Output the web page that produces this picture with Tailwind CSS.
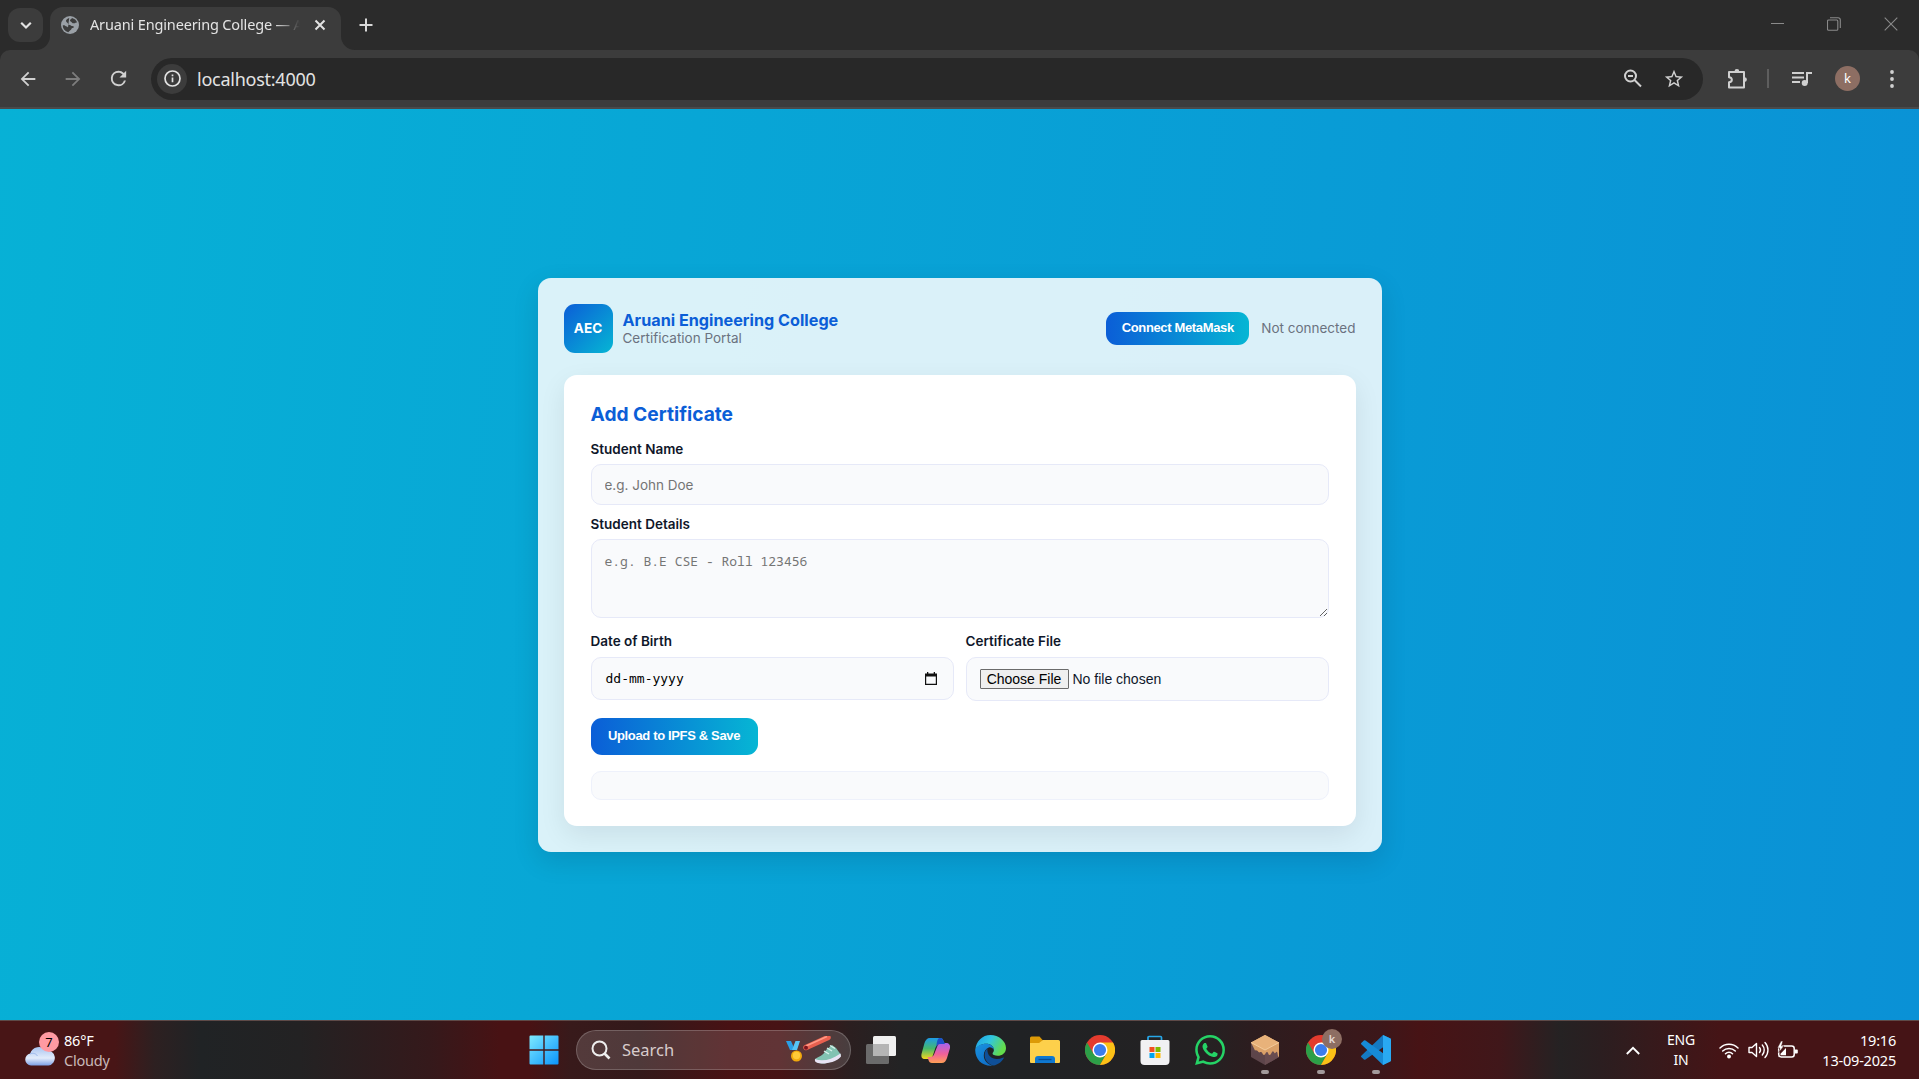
<!DOCTYPE html>
<html lang="en">
<head>
<meta charset="utf-8">
<title>Aruani Engineering College — Certification Portal</title>
<script src="https://cdn.jsdelivr.net/npm/@tailwindcss/browser@4"></script>
</head>
<body class="h-[1079px] w-[1919px] overflow-hidden flex flex-col font-['Noto_Sans',sans-serif]">

<!-- tab strip -->
<header class="h-[109px] shrink-0 flex flex-col bg-[#2b2b2b] text-[#e3e3e3]">
  <div class="h-[50px] flex items-start justify-between">
    <div class="flex items-start pl-2">
      <button class="mt-2 w-[35px] h-[34px] rounded-xl bg-[#3c3c3c] flex items-center justify-center">
        <svg class="w-3.5 h-3.5" viewBox="0 0 14 14" fill="none" stroke="#e3e3e3" stroke-width="2.2"><path d="M2.2 4.8 7 9.5l4.800-4.700"/></svg>
      </button>
      <div class="relative ml-[7px] mt-[7px] h-[43px] w-[291px] rounded-t-[13px] bg-[#3c3c3c] flex items-center pl-[11px] pb-[7px]">
        <svg class="absolute left-[-14px] bottom-0 w-3.5 h-3.5" viewBox="0 0 14 14"><path d="M14 0v14H0A14 14 0 0 0 14 0Z" fill="#3c3c3c"/></svg>
        <svg class="absolute right-[-14px] bottom-0 w-3.5 h-3.5" viewBox="0 0 14 14"><path d="M0 0v14h14A14 14 0 0 1 0 0Z" fill="#3c3c3c"/></svg>
        <svg class="w-[18px] h-[18px] shrink-0" viewBox="0 0 18 18"><circle cx="9" cy="9" r="9" fill="#9aa0a6"/><path d="M8.200 1.900C6.500 2.400 5 3.500 5 5c0 1.500 2 1.400 2 2.700C7 9 8.800 8.500 9.500 9.300c.9.900 1.500.700 2.600.9 1.400.2.800 1.700-.6 1.800-1.200 0-1 1.700-2.200 2.300-.9.500-1.300 1.200-2 1.900A7.400 7.400 0 0 1 1.700 9.500C3 8.600 4 9.600 5 10.200c.9.600 1.700.3 2 1.200" fill="#3c3c3c"/><path d="M11 2c-.6 1.300-2 1.300-2 2.500s1.500 1 1.900 2c.4 1 2.700 1.200 3.700.3.600-.5 1.300-.4 1.600-.2A7.500 7.500 0 0 0 11 2Z" fill="#3c3c3c"/></svg>
        <span class="ml-[11px] w-[210px] overflow-hidden whitespace-nowrap text-[14.500px] tracking-[-0.150px] [mask-image:linear-gradient(to_right,black_88%,transparent)]">Aruani Engineering College — Aruani</span>
        <svg class="ml-[13px] w-3.5 h-3.5 shrink-0" viewBox="0 0 14 14" stroke="#e3e3e3" stroke-width="2"><path d="m2.500 2.500 9 9m0-9-9 9"/></svg>
      </div>
      <svg class="ml-[18px] mt-[18px] w-[14px] h-[14px]" viewBox="0 0 14 14" stroke="#d8d8d8" stroke-width="2"><path d="M7 .5v13M.5 7h13"/></svg>
    </div>
    <div class="flex items-center gap-[43px] pt-[17px] pr-[21px]">
      <svg class="w-[13px] h-[14px]" viewBox="0 0 13 14" stroke="#8a8a8a"><path d="M0 6.500h13"/></svg>
      <svg class="w-[14px] h-[14px]" viewBox="0 0 14 14" fill="none" stroke="#8a8a8a" stroke-width="1.100"><rect x=".5" y="3" width="10.300" height="10.300" rx="1"/><path d="M3 .7h8a2.300 2.300 0 0 1 2.300 2.300v8"/></svg>
      <svg class="w-[14px] h-[14px]" viewBox="0 0 14 14" stroke="#8a8a8a" stroke-width="1.100"><path d="m.7.7 12.600 12.600m0-12.600L.7 13.300"/></svg>
    </div>
  </div>

  <!-- toolbar -->
  <div class="h-[59px] rounded-t-[10px] bg-[#3c3c3c] border-b-2 border-[#4a4a4a] flex items-center">
    <div class="flex items-center pl-[17px] gap-[23px]">
      <svg class="w-[22px] h-[22px]" viewBox="0 0 24 24" fill="#d0d0d0"><path d="M20 11H7.830l5.590-5.590L12 4l-8 8 8 8 1.410-1.410L7.830 13H20v-2z"/></svg>
      <svg class="w-[22px] h-[22px]" viewBox="0 0 24 24" fill="#7d7d7d"><path d="m12 4-1.410 1.410L16.170 11H4v2h12.170l-5.580 5.590L12 20l8-8z"/></svg>
      <svg class="w-[23px] h-[23px]" viewBox="0 0 24 24" fill="#d0d0d0"><path d="M17.650 6.350A7.950 7.950 0 0 0 12 4a8 8 0 1 0 7.750 10h-2.080A6 6 0 1 1 12 6c1.660 0 3.140.69 4.220 1.780L13 11h7V4l-2.350 2.350z"/></svg>
    </div>
    <div class="ml-[21px] h-[42px] w-[1552px] rounded-full bg-[#282828] flex items-center pl-1.5">
      <div class="w-[30px] h-[30px] rounded-full bg-[#3c3c3c] flex items-center justify-center">
        <svg class="w-[17px] h-[17px]" viewBox="0 0 17 17" fill="none" stroke="#e3e3e3" stroke-width="1.700"><circle cx="8.500" cy="8.500" r="7.500"/><path d="M8.500 7.500v4.700M8.500 4.500v1.800"/></svg>
      </div>
      <span class="ml-[10px] text-[18px] leading-none tracking-[-0.250px]">localhost:4000</span>
      <div class="ml-auto flex items-center gap-[19px] pr-[18px]">
        <svg class="w-[22px] h-[22px]" viewBox="0 0 22 22" fill="none" stroke="#d0d0d0" stroke-width="2"><circle cx="8.500" cy="8" r="5.500"/><path d="m12.500 12 6.500 6.500M6 8h5"/></svg>
        <svg class="w-[22px] h-[22px]" viewBox="0 0 24 24" fill="#d0d0d0"><path d="m22 9.240-7.190-.62L12 2 9.190 8.630 2 9.240l5.460 4.730L5.820 21 12 17.270 18.180 21l-1.630-7.030L22 9.240zM12 15.400l-3.760 2.270 1-4.280-3.320-2.880 4.380-.38L12 6.100l1.710 4.040 4.380.38-3.320 2.880 1 4.280L12 15.400z"/></svg>
      </div>
    </div>
    <div class="flex items-center">
      <svg class="ml-6 w-[22px] h-[22px]" viewBox="0 0 22 22" fill="none" stroke="#d0d0d0" stroke-width="2" stroke-linejoin="round"><path d="M2 4h15v15.500H2v-5.200c3.800-.4 3.800-4.700 0-5.100Z"/><path d="M7.500 3.500a2.400 2.400 0 0 1 4.800 0ZM17.500 9.200a2.400 2.400 0 0 1 0 4.800Z" fill="#d0d0d0" stroke="none"/></svg>
      <div class="ml-[18px] w-[2px] h-[19px] bg-[#5e5e5e]"></div>
      <svg class="ml-[23px] w-[21px] h-[18px]" viewBox="0 0 21 18" fill="none" stroke="#d0d0d0" stroke-width="2"><path d="M0 3h12M0 7.500h12M0 12h8M15 13V3h5"/><circle cx="12.700" cy="13" r="3" fill="#d0d0d0" stroke="none"/></svg>
      <div class="ml-[22px] w-[25px] h-[25px] rounded-full bg-[#8d6e63] flex items-center justify-center text-[13px] text-white">k</div>
      <svg class="ml-[30px] w-1 h-[18px]" viewBox="0 0 4 18" fill="#d0d0d0"><circle cx="2" cy="2" r="1.900"/><circle cx="2" cy="9" r="1.900"/><circle cx="2" cy="16" r="1.900"/></svg>
    </div>
  </div>
</header>

<!-- page -->
<main class="h-[911px] shrink-0 bg-linear-[97deg,#07b1d6,#0a91d6] flex justify-center pt-[169px] text-[#0f172a] font-[Inter,sans-serif]">
  <section class="w-[844px] h-[574px] rounded-[13px] bg-white/85 p-[26px] shadow-[0_9px_27px_rgba(2,6,23,0.120)]">
    <div class="flex items-center h-[49px]">
      <div class="w-[49px] h-[49px] rounded-[11px] bg-linear-[135deg,#0b5ed7,#06b6d4] flex items-center justify-center text-white font-bold text-[13.500px]">AEC</div>
      <div class="ml-[10px]">
        <h1 class="text-[16.200px] leading-[19px] font-bold text-[#0b5ed7]">Aruani Engineering College</h1>
        <p class="text-[13.500px] leading-[16px] text-[#6b7280]">Certification Portal</p>
      </div>
      <button class="ml-auto w-[143px] h-[33px] pb-[2px] rounded-[11px] bg-linear-[90deg,#0b5ed7,#06b6d4] text-white font-bold text-[13px] tracking-[-0.350px] font-['Liberation_Sans',sans-serif]">Connect MetaMask</button>
      <span class="ml-[12px] text-[13.500px] text-[#6b7280]">Not connected</span>
    </div>
    <form class="mt-[22px] h-[451px] rounded-[13px] bg-white px-[27px] pt-[27px] shadow-[0_9px_27px_rgba(2,6,23,0.080)]">
      <h2 class="text-[19.200px] leading-[24px] font-bold text-[#0b5ed7]">Add Certificate</h2>
      <label class="mt-[15px] block text-[13.500px] leading-[16px] font-semibold">Student Name</label>
      <input class="mt-[7px] block w-full h-[41px] rounded-[10px] border border-[#e6e9f8] bg-[#f9fafc] px-[13px] text-[13.500px] placeholder:text-[#757575]" placeholder="e.g. John Doe">
      <label class="mt-[11px] block text-[13.500px] leading-[16px] font-semibold">Student Details</label>
      <textarea class="mt-[7px] block w-full h-[79px] resize rounded-[10px] border border-[#e6e9f8] bg-[#f9fafc] px-[13px] pt-[12px] text-[13px] leading-[18px] font-['Noto_Sans_Mono','DejaVu_Sans_Mono',monospace] placeholder:text-[#757575]" placeholder="e.g. B.E CSE - Roll 123456"></textarea>
      <div class="mt-[15px] grid grid-cols-[363px_363px] gap-3">
        <div>
          <label class="block text-[13.500px] leading-[16px] font-semibold">Date of Birth</label>
          <div class="mt-2 h-[43px] rounded-[10px] border border-[#e6e9f8] bg-[#f9fafc] pl-[14px] pr-[16px] flex items-center justify-between text-black">
            <span class="text-[13px] font-['DejaVu_Sans_Mono',monospace]">dd-mm-yyyy</span>
            <svg class="w-3 h-[13px]" viewBox="0 0 12 13"><path d="M.6 2.500h10.800v9.800H.6Z" fill="none" stroke="#111" stroke-width="1.200"/><path d="M0 1.500h12v3H0ZM2 0h1.300v2H2ZM8.700 0H10v2H8.700Z" fill="#111"/></svg>
          </div>
        </div>
        <div>
          <label class="block text-[13.500px] leading-[16px] font-semibold">Certificate File</label>
          <div class="mt-2 h-[44px] rounded-[10px] border border-[#e6e9f8] bg-[#f9fafc] pl-[13px] flex items-center font-['Liberation_Sans',sans-serif] text-[14px]">
            <button type="button" class="w-[89px] h-5 border border-[#6b6b6b] rounded-[1px] bg-[#efefef] text-black leading-none">Choose File</button>
            <span class="ml-1">No file chosen</span>
          </div>
        </div>
      </div>
      <button type="button" class="mt-[17px] block w-[167px] h-[37px] pb-[2px] rounded-[11px] bg-linear-[90deg,#0b5ed7,#06b6d4] text-white font-bold text-[13px] tracking-[-0.350px] font-['Liberation_Sans',sans-serif]">Upload to IPFS &amp; Save</button>
      <div class="mt-4 h-[29px] rounded-[10px] border border-[#eef1fb] bg-[#f9fafc]"></div>
    </form>
  </section>
</main>

<!-- taskbar -->
<footer class="relative h-[59px] shrink-0 border-t border-[#5e4a48] text-white bg-linear-[90deg,#481516_0px,#481516_115px,#2d2021_155px,#202325_200px,#232223_300px,#35191b_430px,#481214_500px,#481214_530px,#381a1b_570px,#33191a_640px,#481214_730px,#471315_780px,#2b1f20_850px,#232324_900px,#202224_1020px,#242223_1200px,#2c1d1f_1250px,#3c171a_1380px,#471315_1420px,#40171a_1500px,#252223_1560px,#2b1e20_1600px,#451416_1720px,#451416_1919px] flex items-center">
  <div class="flex items-center w-[529px] pl-6">
    <div class="relative w-[34px] h-[40px]">
      <svg class="absolute left-[1px] top-[14px] w-[30px] h-[22px]" viewBox="0 0 30 22"><defs><linearGradient id="cl" x1="0" y1="0" x2="0" y2="1"><stop offset="0" stop-color="#a9c4f0"/><stop offset=".6" stop-color="#e3ecfb"/><stop offset="1" stop-color="#7c9fe4"/></linearGradient></defs><path d="M6 21.500a6 6 0 0 1-.8-11.900A9 9 0 0 1 21 6.500a7.300 7.300 0 0 1 2.500 15Z" fill="url(#cl)"/><path d="M5 10c3-1.500 6-.5 7.500 2" stroke="#9db9ec" fill="none"/></svg>
      <span class="absolute left-[15px] top-[2px] w-5 h-5 rounded-full bg-[#ff9aa2] text-black text-[13px] leading-5 text-center">7</span>
    </div>
    <div class="ml-[6px] text-[14.500px] leading-[20px] tracking-[-0.200px]"><div>86°F</div><div class="text-[#c9b9b9]">Cloudy</div></div>
  </div>
  <svg class="w-[30px] h-[30px]" viewBox="0 0 30 30"><defs><linearGradient id="wn" x1="0" y1="0" x2="1" y2="1"><stop offset="0" stop-color="#7eeaff"/><stop offset="1" stop-color="#0a94fb"/></linearGradient></defs><path d="M1.500.5H14.300v13.800H.5V1.500a1 1 0 0 1 1-1ZM15.700.5h12.800a1 1 0 0 1 1 1v12.800H15.700ZM.5 15.700h13.800v13.800H1.500a1 1 0 0 1-1-1ZM15.700 15.700h13.800v12.800a1 1 0 0 1-1 1H15.700Z" fill="url(#wn)"/></svg>
  <div class="ml-[17px] w-[275px] h-10 rounded-full bg-white/14 border border-white/20 flex items-center pl-[14px] pr-[8px]">
    <svg class="w-[20px] h-[20px]" viewBox="0 0 20 20" fill="none" stroke="#eee" stroke-width="2"><circle cx="8.500" cy="8.500" r="7"/><path d="m13.500 13.500 5 5" stroke-width="2.600"/></svg>
    <span class="ml-[11px] text-[16.500px] text-[#d8cccc] leading-none">Search</span>
    <svg class="ml-auto w-[56px] h-[29px]" viewBox="0 0 56 29"><path d="M0 5h5l4 9H4Z" fill="#2a9fe6"/><path d="M14 5H9.500L6 14h5Z" fill="#57c4f5"/><circle cx="10.500" cy="20" r="5.500" fill="#f2a90d"/><circle cx="10.500" cy="19.500" r="3.700" fill="#ffc938"/><path d="m20 11.500 22-10" stroke="#e9604f" stroke-width="5.500" stroke-linecap="round"/><path d="m20 10 21-9.500" stroke="#ff9a86" stroke-width="1.500"/><circle cx="20" cy="11.800" r="2" fill="#7b1620"/><path d="M29 23c3-2 8-3 11-9l6-5 4 3c2 3 4 5 5 7l-3 4c-5 2-9 4-14 4.500-5 0-9-1-9-4.500Z" fill="#82c3b2"/><path d="M29 23c7 3 16 1 25.500-5.500l.5 3c-4 5-13 7-18 7s-9-1-8-4.500Z" fill="#e9e3f4"/><path d="m38 15 5 3m-2-6 5 3M44 9.500l5 3" stroke="#d9f3ec" stroke-width="1.400"/></svg>
  </div>

  <svg class="ml-[15px] w-[30px] h-[28px]" viewBox="0 0 30 28"><rect x="7" y="0" width="23" height="20" rx="1.500" fill="#f0f0f0"/><rect x="0" y="8" width="23" height="20" rx="1.500" fill="#6b6b6b"/><path d="M7 8h16v12H7Z" fill="#b5b5b5"/></svg>

  <svg class="ml-[25px] w-[30px] h-[27px]" viewBox="0 0 30 27"><defs><linearGradient id="c1" x1="0" y1="0" x2="0" y2="1"><stop offset="0" stop-color="#1d9be8"/><stop offset=".5" stop-color="#46b86c"/><stop offset="1" stop-color="#f4d61e"/></linearGradient><linearGradient id="c2" x1="0" y1="0" x2="0" y2="1"><stop offset="0" stop-color="#a463ee"/><stop offset=".55" stop-color="#f0609a"/><stop offset="1" stop-color="#ffa055"/></linearGradient></defs><path d="M19 1c2 0 3 1 3.500 3L24 7h-5c-3 0-4 2-5 5l-2 6c-1 3-2 4-4 4H4c-3 0-4-2-3.500-5l3-11C4.500 3 6 1 9 1Z" fill="url(#c1)"/><path d="M11 26c-2 0-3-1-3.500-3L6.500 20H9c3 0 4-2 5-5l2-5c1-3 2-4 5-4h4c3 0 4.500 2 4 5l-3 10c-1 3-2.500 5-5.500 5Z" fill="url(#c2)"/><path d="M19 1c2 0 3 1 3.500 3L24 7h-5c-2 0-3 1-4 3l1-5c.5-2 1-4 3-4Z" fill="#1c4fc9"/></svg>

  <svg class="ml-[24px] w-[31px] h-[31px]" viewBox="0 0 30 30"><defs><linearGradient id="e1" x1="0" y1="0" x2="1" y2=".4"><stop offset="0" stop-color="#1b9de8"/><stop offset=".5" stop-color="#31c6e0"/><stop offset="1" stop-color="#63dc4c"/></linearGradient><linearGradient id="e2" x1="0" y1="0" x2=".6" y2="1"><stop offset="0" stop-color="#1a93e0"/><stop offset="1" stop-color="#0f6fc8"/></linearGradient></defs><path d="M.4 14C1 6 7 0 15 0s15 6 15 12.500c0 5-4 7.500-8 7.500-3 0-5-1-5-2.200 0-.8 1.300-1.300 1.300-3.300C18.300 11 15 8.500 11 8.500 6 8.500 2 11 .4 14Z" fill="url(#e1)"/><path d="M.2 14C2 10.500 6 8.400 11 8.500c4 0 7.300 2.500 7.300 6-1-2.300-3.300-3-5-2.500-3 1-4.800 4-4.800 7.500 0 5 3.500 9 9 10.200C8 31 0 24.500.2 14Z" fill="url(#e2)"/><path d="M12 13c-4 3-4.500 14 6 16.500 4-.6 8-3.500 9.800-7 .3-.7-.3-1-1-.6-7 3.300-15.500.2-14.800-8.900Z" fill="#0f4f97"/></svg>

  <svg class="ml-[24px] w-[30px] h-[28px]" viewBox="0 0 30 28"><path d="M0 2a1.500 1.500 0 0 1 1.500-1.500H9.500L13 4.500V9H0Z" fill="#dc9a07"/><path d="M0 7h9l4-3h15.500A1.500 1.500 0 0 1 30 5.500V26a1 1 0 0 1-1 1H1a1 1 0 0 1-1-1Z" fill="#fdd04b"/><path d="M5 27v-4a3 3 0 0 1 3-3h14a3 3 0 0 1 3 3v4Z" fill="#0f78d0"/><path d="M8.500 23.500h13" stroke="#0a4d92" stroke-width="1.300"/></svg>

  <svg class="ml-[25px] w-[30px] h-[30px]" viewBox="0 0 48 48"><circle cx="24" cy="24" r="24" fill="#e33b2e"/><path d="M3.200 12A24 24 0 0 0 24 48l10.400-18L13.600 30Z" fill="#2c9f48"/><path d="M24 48A24 24 0 0 0 44.800 12H24l10.400 18Z" fill="#fbc116"/><circle cx="24" cy="24" r="12" fill="#fff"/><circle cx="24" cy="24" r="9.700" fill="#3b7ded"/></svg>

  <svg class="ml-[25px] w-[30px] h-[30px]" viewBox="0 0 30 30"><path d="M8 8V2.500a1 1 0 0 1 1-1h11.500a1 1 0 0 1 1 1V8" fill="none" stroke="#27a7e8" stroke-width="1.700"/><path d="M.5 6.500a1.500 1.500 0 0 1 1.500-1.500h26a1.500 1.500 0 0 1 1.500 1.500V26a4 4 0 0 1-4 4h-21a4 4 0 0 1-4-4Z" fill="#f1f1f3"/><path d="M9.500 12h5v5h-5Z" fill="#f25022"/><path d="M15.500 12h5v5h-5Z" fill="#7fba00"/><path d="M9.500 18h5v5h-5Z" fill="#00a4ef"/><path d="M15.500 18h5v5h-5Z" fill="#ffb900"/></svg>

  <svg class="ml-[25px] w-[30px] h-[30px]" viewBox="0 0 24 24" fill="#25d366"><path d="M17.472 14.382c-.297-.149-1.758-.867-2.030-.967-.273-.099-.471-.148-.67.150-.197.297-.767.966-.940 1.164-.173.199-.347.223-.644.075-.297-.150-1.255-.463-2.390-1.475-.883-.788-1.480-1.761-1.653-2.059-.173-.297-.018-.458.130-.606.134-.133.298-.347.446-.520.149-.174.198-.298.298-.497.099-.198.050-.371-.025-.520-.075-.149-.669-1.612-.916-2.207-.242-.579-.487-.5-.669-.510-.173-.008-.371-.010-.570-.010-.198 0-.520.074-.792.372-.272.297-1.040 1.016-1.040 2.479 0 1.462 1.065 2.875 1.213 3.074.149.198 2.096 3.200 5.077 4.487.709.306 1.262.489 1.694.625.712.227 1.360.195 1.871.118.571-.085 1.758-.719 2.006-1.413.248-.694.248-1.289.173-1.413-.074-.124-.272-.198-.570-.347m-5.421 7.403h-.004a9.870 9.870 0 0 1-5.031-1.378l-.361-.214-3.741.982.998-3.648-.235-.374a9.860 9.860 0 0 1-1.510-5.260c.001-5.450 4.436-9.884 9.888-9.884 2.640 0 5.122 1.030 6.988 2.898a9.825 9.825 0 0 1 2.893 6.994c-.003 5.450-4.437 9.884-9.885 9.884m8.413-18.297A11.815 11.815 0 0 0 12.050 0C5.495 0 .160 5.335.157 11.892c0 2.096.547 4.142 1.588 5.945L.057 24l6.305-1.654a11.882 11.882 0 0 0 5.683 1.448h.005c6.554 0 11.890-5.335 11.893-11.893a11.821 11.821 0 0 0-3.480-8.413z"/></svg>

  <div class="relative ml-[26px] w-[28px] h-[30px]">
    <svg class="w-[28px] h-[30px]" viewBox="0 0 28 30"><path d="M0 8 14 0l14 8v14l-14 8-14-8Z" fill="#5d454a"/><path d="M14 15 28 8v14l-14 8Z" fill="#684c50"/><path d="M0 7.500 14 0l14 7.500V22c-1.500 0-1-4-2-5s-1.500 2-2.500 1-1-2-2-1.500-1.500 3.500-3 3.500-1-3-2.500-3-1.500 3-3 3-1.500-3-3-3-1.500 1-2.500 0-1.500-2-3.500-1.500Z" fill="#d9a068"/><path d="M0 7.500 14 0l14 7.500L14 15Z" fill="#e8b27a"/><path d="M0 7.500 14 15l14-7.500" fill="none" stroke="#f3cb9b"/></svg>
    <span class="absolute left-[10px] top-[35px] w-2 h-1 rounded-full bg-[#a39a9b]"></span>
  </div>

  <div class="relative ml-[27px] w-[30px] h-[30px]">
    <svg class="w-[30px] h-[30px]" viewBox="0 0 48 48"><circle cx="24" cy="24" r="24" fill="#e33b2e"/><path d="M3.200 12A24 24 0 0 0 24 48l10.400-18L13.600 30Z" fill="#2c9f48"/><path d="M24 48A24 24 0 0 0 44.800 12H24l10.400 18Z" fill="#fbc116"/><circle cx="24" cy="24" r="12" fill="#fff"/><circle cx="24" cy="24" r="9.700" fill="#3b7ded"/></svg>
    <span class="absolute left-[16px] top-[-6px] w-5 h-5 rounded-full bg-[#8d6e63] text-center text-[11px] leading-5 font-semibold text-[#e5dad6]">k</span>
    <span class="absolute left-[11px] top-[35px] w-2 h-1 rounded-full bg-[#a39a9b]"></span>
  </div>

  <div class="relative ml-[25px] w-[30px] h-[30px]">
    <svg class="w-[30px] h-[30px]" viewBox="0 0 30 30"><path d="m22 0 7 3.200a1.700 1.700 0 0 1 1 1.500v2L4.500 24.500a1.200 1.200 0 0 1-1.600-.1L.5 22.200a1.200 1.200 0 0 1 0-1.800Z" fill="#1479c2"/><path d="M22 30 .5 9.600a1.200 1.200 0 0 1 0-1.800l2.400-2.200a1.200 1.200 0 0 1 1.600-.1L30 24v1.500Z" fill="#168ad6"/><path d="M22 .1v29.800l7-3.200a1.700 1.700 0 0 0 1-1.500V4.800a1.700 1.700 0 0 0-1-1.500Z" fill="#29a9f2"/></svg>
    <span class="absolute left-[11px] top-[35px] w-2 h-1 rounded-full bg-[#a39a9b]"></span>
  </div>

  <div class="ml-auto flex items-center pr-[23px]">
    <svg class="w-[14px] h-[9px]" viewBox="0 0 14 9" fill="none" stroke="#fff" stroke-width="1.900"><path d="m.8 8 6.200-6.200L13.200 8"/></svg>
    <div class="ml-[26px] w-[30px] text-center text-[14px] leading-[20px] tracking-[-0.200px]">ENG<br>IN</div>
    <svg class="ml-[23px] w-[20px] h-[17px]" viewBox="0 0 20 17" fill="none" stroke="#fff" stroke-width="1.500" stroke-linecap="round"><path d="M1 6a12.800 12.800 0 0 1 18 0M3.700 9a9 9 0 0 1 12.600 0M6.500 11.800a5 5 0 0 1 7 0"/><circle cx="10" cy="14.500" r="1.200" fill="#fff"/></svg>
    <svg class="ml-[9px] w-[21px] h-[18px]" viewBox="0 0 21 18" fill="none" stroke="#fff" stroke-width="1.400" stroke-linejoin="round" stroke-linecap="round"><path d="M1 6.500v5h3l4.500 4V2.500L4 6.500ZM11.500 6.500a4 4 0 0 1 0 5M14.300 4a7.500 7.500 0 0 1 0 10M17 1.500a11 11 0 0 1 0 15"/></svg>
    <svg class="ml-[8px] w-[21px] h-[18px]" viewBox="0 0 21 18"><rect x="1.700" y="5" width="15.500" height="11" rx="2.500" fill="none" stroke="#fff" stroke-width="1.500"/><path d="M18 8.500h2a.8.800 0 0 1 .8.800v2.400a.8.800 0 0 1-.8.800h-2ZM3.500 14.200v-1.500L9 7v7.200Z" fill="#fff"/><path d="M4 0 .3 7h2.500L1.800 11.500 7 5H4.500L6 0Z" fill="#fff" stroke="#451416" stroke-width=".6"/></svg>
    <div class="ml-[20px] w-[78px] text-right text-[14.500px] leading-[20px] tracking-[-0.200px] whitespace-nowrap">19:16<br>13-09-2025</div>
  </div>
</footer>
</body>
</html>
